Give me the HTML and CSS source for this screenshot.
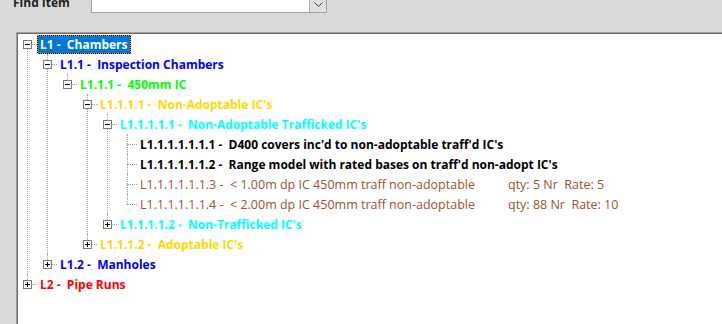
FILE: index.html
```html
<!DOCTYPE html>
<html lang="en">
<head>
    <meta charset="UTF-8">
    <meta name="viewport" content="width=device-width, initial-scale=1.0">
    <title>Find Item - Schedule Tree</title>
    <link rel="stylesheet" href="styles.css">
</head>
<body>

    <!-- Search bar -->
    <div class="find-bar">
        <label class="find-label" for="findItem">Find Item</label>
        <div class="combo">
            <input type="text" id="findItem">
            <span class="combo-button">
                <svg width="9" height="5" viewBox="0 0 9 5"><path d="M0.5 0.5 L4.5 4.5 L8.5 0.5" fill="none" stroke="#404040" stroke-width="1"/></svg>
            </span>
        </div>
    </div>

    <!-- Tree -->
    <div class="tree-panel">
        <ul class="tree root">
            <li>
                <div class="row"><span class="toggle minus"></span><span class="label selected">L1 -  Chambers</span></div>
                <ul>
                    <li>
                        <div class="row"><span class="toggle minus"></span><span class="label c-blue">L1.1 -  Inspection Chambers</span></div>
                        <ul>
                            <li>
                                <div class="row"><span class="toggle minus"></span><span class="label c-lime">L1.1.1 -  450mm IC</span></div>
                                <ul>
                                    <li>
                                        <div class="row"><span class="toggle minus"></span><span class="label c-gold">L1.1.1.1 -  Non-Adoptable IC's</span></div>
                                        <ul>
                                            <li>
                                                <div class="row"><span class="toggle minus"></span><span class="label c-cyan">L1.1.1.1.1 -  Non-Adoptable Trafficked IC's</span></div>
                                                <ul>
                                                    <li class="leaf">
                                                        <div class="row"><span class="toggle"></span><span class="label c-black">L1.1.1.1.1.1.1 -  D400 covers inc'd to non-adoptable traff'd IC's</span></div>
                                                    </li>
                                                    <li class="leaf">
                                                        <div class="row"><span class="toggle"></span><span class="label c-black">L1.1.1.1.1.1.2 -  Range model with rated bases on traff'd non-adopt IC's</span></div>
                                                    </li>
                                                    <li class="leaf">
                                                        <div class="row"><span class="toggle"></span><span class="label c-brown"><span class="desc">L1.1.1.1.1.1.3 -  &lt; 1.00m dp IC 450mm traff non-adoptable</span><span class="qty">qty: 5 Nr  Rate: 5</span></span></div>
                                                    </li>
                                                    <li class="leaf">
                                                        <div class="row"><span class="toggle"></span><span class="label c-brown"><span class="desc">L1.1.1.1.1.1.4 -  &lt; 2.00m dp IC 450mm traff non-adoptable</span><span class="qty">qty: 88 Nr  Rate: 10</span></span></div>
                                                    </li>
                                                </ul>
                                            </li>
                                            <li>
                                                <div class="row"><span class="toggle plus"></span><span class="label c-cyan">L1.1.1.1.2 -  Non-Trafficked IC's</span></div>
                                            </li>
                                        </ul>
                                    </li>
                                    <li>
                                        <div class="row"><span class="toggle plus"></span><span class="label c-gold">L1.1.1.2 -  Adoptable IC's</span></div>
                                    </li>
                                </ul>
                            </li>
                        </ul>
                    </li>
                    <li>
                        <div class="row"><span class="toggle plus"></span><span class="label c-blue">L1.2 -  Manholes</span></div>
                    </li>
                </ul>
            </li>
            <li>
                <div class="row"><span class="toggle plus"></span><span class="label c-red">L2 -  Pipe Runs</span></div>
            </li>
        </ul>
    </div>

</body>
</html>
```

FILE: styles.css
```css
body {
    margin: 0;
    background-color: #d9d9d9;
    font-family: "Open Sans", "Liberation Sans", sans-serif;
    overflow: hidden;
    height: 324px;
}

/* Search bar, partly scrolled off the top */
.find-bar {
    display: flex;
    align-items: center;
    height: 22px;
    margin-top: -9px;
}

.find-label {
    width: 91px;
    padding-left: 13px;
    box-sizing: border-box;
    font-size: 12px;
    font-weight: bold;
    color: #1e1e1e;
}

.combo {
    display: flex;
    height: 22px;
    width: 236px;
    border: 1px solid #a0a0a0;
    box-sizing: border-box;
    background: #fff;
}

.combo input {
    flex: 1;
    border: none;
    margin: 0;
    padding: 0;
    min-width: 0;
    background: #fff;
}

.combo-button {
    width: 17px;
    display: flex;
    align-items: flex-end;
    justify-content: center;
    padding-bottom: 5px;
    box-sizing: border-box;
    background: #e1e1e1;
    border-left: 1px solid #adadad;
}

/* Tree panel */
.tree-panel {
    margin: 19px 0 0 16px;
    width: 720px;
    height: 300px;
    background: #fff;
    border-top: 1px solid #a0a0a0;
    border-left: 1px solid #a0a0a0;
    padding: 1px 0 0 1px;
    box-shadow: inset 1px 1px 0 #696969;
    font-size: 12px;
}

.tree,
.tree ul {
    list-style: none;
    margin: 0;
    padding: 0;
}

.tree ul {
    padding-left: 20px;
}

.tree li {
    position: relative;
}

/* connector lines */
.tree li::before {
    content: "";
    position: absolute;
    left: 9px;
    top: 0;
    bottom: 0;
    border-left: 1px dotted #a0a0a0;
}

.tree li:last-child::before {
    bottom: auto;
    height: 10px;
}

.tree.root > li:first-child::before {
    top: 10px;
}

.tree.root > li:last-child::before {
    height: 10px;
}

.tree li::after {
    content: "";
    position: absolute;
    left: 9px;
    top: 10px;
    width: 10px;
    border-top: 1px dotted #a0a0a0;
}

.row {
    display: flex;
    align-items: center;
    height: 20px;
    white-space: pre;
}

.toggle {
    position: relative;
    z-index: 1;
    width: 9px;
    height: 9px;
    margin: 0 5px;
    box-sizing: border-box;
    flex-shrink: 0;
}

.toggle.minus,
.toggle.plus {
    border: 1px solid #7a7a7a;
    background: #fff;
}

.toggle.minus::before,
.toggle.plus::before {
    content: "";
    position: absolute;
    left: 1px;
    top: 3px;
    width: 5px;
    height: 1px;
    background: #000;
}

.toggle.plus::after {
    content: "";
    position: absolute;
    left: 3px;
    top: 1px;
    width: 1px;
    height: 5px;
    background: #000;
}

.label {
    display: flex;
    align-items: center;
    height: 19px;
    padding: 0 3px;
    box-sizing: border-box;
    font-weight: bold;
    position: relative;
    z-index: 1;
}

.label.selected {
    color: #fff;
    border: 1px dotted #ff9a20;
    background: linear-gradient(#0078d7, #0078d7) padding-box, #000 border-box;
    padding: 0 2px;
}

.c-blue { color: #0000ff; }
.c-lime { color: #00ff00; }
.c-gold { color: #ffd700; }
.c-cyan { color: #00ffff; }
.c-black { color: #000; }
.c-red { color: #ff0000; }

.c-brown {
    color: #a0522d;
    font-weight: normal;
    font-size: 12.5px;
}

.desc {
    display: inline-block;
    width: 368px;
}
```
